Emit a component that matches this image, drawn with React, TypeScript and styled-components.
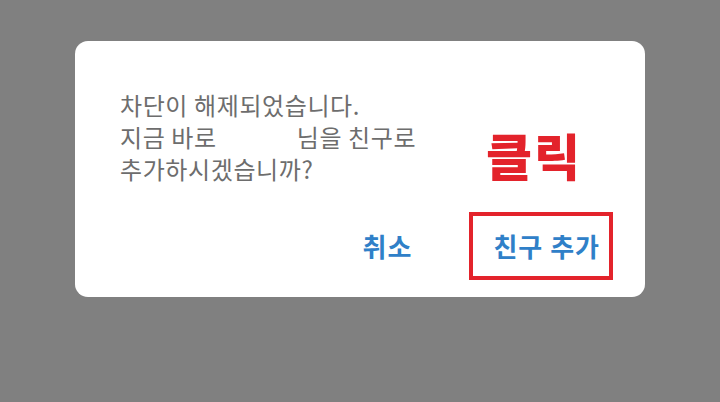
import { createGlobalStyle, styled } from 'styled-components'

const GlobalStyle = createGlobalStyle`
  html, body {
    margin: 0;
    padding: 0;
    background: #808080;
  }
  body {
    font-family: "Noto Sans CJK KR", "Noto Sans", sans-serif;
  }
`

const App = () => {
  return (
    <StyledPage>
      <GlobalStyle />
      <StyledDialog>
        <StyledMessage>
          차단이 해제되었습니다.
          <br />
          지금 바로<StyledNameBlank />님을 친구로
          <br />
          추가하시겠습니까?
        </StyledMessage>
        <StyledClickNote>클릭</StyledClickNote>
        <StyledActions>
          <StyledButton>취소</StyledButton>
          <StyledHighlight>
            <StyledButton>친구 추가</StyledButton>
          </StyledHighlight>
        </StyledActions>
      </StyledDialog>
    </StyledPage>
  )
}

export default App

const StyledPage = styled.div`
  width: 720px;
  height: 402px;
  box-sizing: border-box;
  padding: 41px 0 0 75px;
  background: #808080;
`

const StyledDialog = styled.div`
  position: relative;
  width: 570px;
  height: 256px;
  box-sizing: border-box;
  padding: 48px 32px 17px 45px;

  display: flex;
  flex-direction: column;
  justify-content: space-between;

  background: #ffffff;
  border-radius: 13px;
`

const StyledMessage = styled.p`
  margin: 0;
  font-size: 24px;
  line-height: 32px;
  font-weight: 400;
  color: #6d6d6d;
  letter-spacing: 0.6px;
`

const StyledNameBlank = styled.span`
  display: inline-block;
  width: 80px;
`

const StyledClickNote = styled.div`
  position: absolute;
  left: 411px;
  top: 83px;

  font-size: 50px;
  line-height: 60px;
  font-weight: 900;
  color: #e3232b;
  letter-spacing: 2px;
`

const StyledActions = styled.div`
  display: flex;
  align-items: center;
  justify-content: flex-end;
  gap: 57px;
`

const StyledHighlight = styled.div`
  height: 68px;
  box-sizing: border-box;
  padding: 0 9px 0 20px;

  display: flex;
  align-items: center;

  border: 4px solid #e3232b;
`

const StyledButton = styled.span`
  font-size: 26px;
  line-height: 30px;
  font-weight: 700;
  color: #2f80c8;
  letter-spacing: 1px;
  white-space: nowrap;
`
